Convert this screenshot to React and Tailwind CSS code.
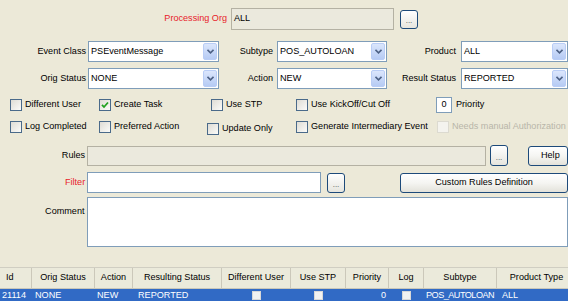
import React from "react";

const font = { fontFamily: '"Liberation Sans", Arial, sans-serif' };

function Combo({ w, value }) {
  return (
    <div
      className="relative flex items-center h-full bg-white border border-[#7f9db9] pl-[2px] shrink-0"
      style={{ width: w }}
    >
      <span className="text-black">{value}</span>
      <div className="absolute right-[1px] top-[1px] bottom-[1px] w-[14px] rounded-[2px] bg-gradient-to-b from-[#dbe6fc] to-[#b6cbf4] border border-[#b9cdf6] flex items-center justify-center">
        <svg width="7" height="5" viewBox="0 0 7 5">
          <path d="M0.5 0.8 L3.5 3.8 L6.5 0.8" stroke="#4d6185" strokeWidth="1.6" fill="none" />
        </svg>
      </div>
    </div>
  );
}

function Check({ checked, disabled }) {
  return (
    <div
      className={
        "w-[12px] h-[12px] shrink-0 border flex items-center justify-center " +
        (disabled
          ? "border-[#dcdad0] bg-[#f4f3ee]"
          : "border-[#4a6a8a] bg-gradient-to-br from-[#dedcd5] to-[#fbfbf9]")
      }
    >
      {checked && (
        <svg width="8" height="8" viewBox="0 0 8 8">
          <path d="M1 3.8 L3 6 L7 1.5" stroke="#21a121" strokeWidth="1.8" fill="none" />
        </svg>
      )}
    </div>
  );
}

function CheckItem({ label, checked, disabled, w, dy = 0 }) {
  return (
    <div className="flex items-center shrink-0" style={{ width: w, marginTop: dy }}>
      <Check checked={checked} disabled={disabled} />
      <span className={"ml-[3px] whitespace-nowrap " + (disabled ? "text-[#b8b5a8]" : "text-black")}>
        {label}
      </span>
    </div>
  );
}

function Dots({ w = 18, h = 19 }) {
  return (
    <div
      className="shrink-0 rounded-[3px] border border-[#1d4a7a] bg-gradient-to-b from-[#ffffff] to-[#e6e5de] flex items-end justify-center pb-[3px] text-[#4a4a4a] leading-none"
      style={{ width: w, height: h }}
    >
      <span className="text-[8px] tracking-[0px]">...</span>
    </div>
  );
}

function Btn({ children, w, h = 20, cls = "" }) {
  return (
    <div
      className={"shrink-0 rounded-[3px] border border-[#1d4a7a] bg-gradient-to-b from-[#ffffff] via-[#f5f5f2] to-[#e3e2da] flex items-center justify-center text-black " + cls}
      style={{ width: w, height: h }}
    >
      {children}
    </div>
  );
}

const cols = [
  { name: "Id", w: 32, align: "left" },
  { name: "Orig Status", w: 63 },
  { name: "Action", w: 38 },
  { name: "Resulting Status", w: 89 },
  { name: "Different User", w: 69 },
  { name: "Use STP", w: 55 },
  { name: "Priority", w: 43 },
  { name: "Log", w: 35 },
  { name: "Subtype", w: 73 },
  { name: "Product Type", w: 80 },
];

function CellBox() {
  return <div className="w-[9px] h-[9px] bg-[#f2f2f2] border border-[#d8d8d8]" />;
}

export default function App() {
  return (
    <div
      className="w-[568px] h-[301px] bg-[#ece9d8] overflow-hidden text-[9.1px] leading-none relative"
      style={font}
    >
      {/* Processing Org */}
      <div className="flex items-center h-[22px] mt-[8px]">
        <div className="w-[227px] text-right text-[#e8222a]">Processing Org</div>
        <div className="ml-[4px] w-[163px] h-full border border-[#b4b1a3] bg-[#ebe9dd] flex items-center pl-[2px]">
          ALL
        </div>
        <div className="ml-[6px]">
          <Dots w={18} h={19} />
        </div>
      </div>

      {/* Event Class row */}
      <div className="flex items-center h-[21px] mt-[11px]">
        <div className="w-[86px] text-right">Event Class</div>
        <div className="ml-[2px] h-full flex">
          <Combo w={131} value="PSEventMessage" />
        </div>
        <div className="w-[54px] text-right">Subtype</div>
        <div className="ml-[4px] h-full flex">
          <Combo w={110} value="POS_AUTOLOAN" />
        </div>
        <div className="w-[69px] text-right">Product</div>
        <div className="ml-[5px] h-full flex">
          <Combo w={107} value="ALL" />
        </div>
      </div>

      {/* Orig Status row */}
      <div className="flex items-center h-[21px] mt-[6px]">
        <div className="w-[86px] text-right">Orig Status</div>
        <div className="ml-[2px] h-full flex">
          <Combo w={131} value="NONE" />
        </div>
        <div className="w-[54px] text-right">Action</div>
        <div className="ml-[4px] h-full flex">
          <Combo w={110} value="NEW" />
        </div>
        <div className="w-[69px] text-right">Result Status</div>
        <div className="ml-[5px] h-full flex">
          <Combo w={107} value="REPORTED" />
        </div>
      </div>

      {/* Checkbox row 1 */}
      <div className="flex items-center h-[16px] mt-[8px] pl-[10px]">
        <CheckItem w={89} label="Different User" />
        <CheckItem w={112} label="Create Task" checked />
        <CheckItem w={85} label="Use STP" />
        <CheckItem w={140} label="Use KickOff/Cut Off" />
        <div className="w-[16px] h-[16px] bg-white border border-[#7f9db9] flex items-center justify-center">
          0
        </div>
        <span className="ml-[4px]">Priority</span>
      </div>

      {/* Checkbox row 2 */}
      <div className="flex items-start h-[16px] mt-[8px] pl-[10px]">
        <CheckItem w={89} label="Log Completed" />
        <CheckItem w={108} label="Preferred Action" />
        <CheckItem w={89} label="Update Only" dy={2} />
        <CheckItem w={141} label="Generate Intermediary Event" />
        <CheckItem label="Needs manual Authorization" disabled />
      </div>

      {/* Rules row */}
      <div className="flex items-center h-[21px] mt-[8px]">
        <div className="w-[86px] text-right">Rules</div>
        <div className="ml-[2px] w-[403px] h-[20px] border border-[#b4b1a3] bg-[#ebe9dd]" />
        <div className="ml-[4px]">
          <Dots w={18} h={21} />
        </div>
        <div className="ml-[20px]">
          <Btn w={40} h={20} cls="justify-start pl-[12px]">Help</Btn>
        </div>
      </div>

      {/* Filter row */}
      <div className="flex items-center h-[21px] mt-[6px]">
        <div className="w-[86px] text-right text-[#e8222a]">Filter</div>
        <div className="ml-[2px] w-[236px] h-[21px] border border-[#7f9db9] bg-white" />
        <div className="ml-[6px]">
          <Dots w={18} h={20} />
        </div>
        <div className="ml-[55px]">
          <Btn w={168} h={20}>Custom Rules Definition</Btn>
        </div>
      </div>

      {/* Comment */}
      <div className="flex items-start h-[50px] mt-[4px]">
        <div className="w-[86px] text-right mt-[10px]">Comment</div>
        <div className="ml-[2px] w-[490px] h-full border border-[#7f9db9] bg-white" />
      </div>

      {/* Table */}
      <div className="mt-[20px] border-t border-[#d0cec2]">
        <div className="flex h-[21px] bg-[#ebeadb] border-b border-[#c9c7ba]">
          {cols.map((c, i) => (
            <div
              key={i}
              className={
                "shrink-0 h-full flex items-center border-r border-[#cbc8ba] " +
                (c.align === "left" ? "justify-start pl-[6px]" : "justify-center")
              }
              style={{ width: c.w }}
            >
              {c.name}
            </div>
          ))}
        </div>
        <div className="flex h-[13px] bg-[#316ac5] text-white">
          <div className="shrink-0 w-[32px] flex items-center pl-[2px]">21114</div>
          <div className="shrink-0 w-[63px] flex items-center pl-[3px]">NONE</div>
          <div className="shrink-0 w-[38px] flex items-center pl-[2px]">NEW</div>
          <div className="shrink-0 w-[89px] flex items-center pl-[5px]">REPORTED</div>
          <div className="shrink-0 w-[69px] flex items-center justify-center"><CellBox /></div>
          <div className="shrink-0 w-[55px] flex items-center justify-center"><CellBox /></div>
          <div className="shrink-0 w-[43px] flex items-center justify-end pr-[3px]">0</div>
          <div className="shrink-0 w-[35px] flex items-center justify-center"><CellBox /></div>
          <div className="shrink-0 w-[73px] flex items-center pl-[2px] whitespace-nowrap tracking-[-0.5px]">POS_AUTOLOAN</div>
          <div className="shrink-0 w-[80px] flex items-center pl-[5px]">ALL</div>
        </div>
      </div>
    </div>
  );
}
